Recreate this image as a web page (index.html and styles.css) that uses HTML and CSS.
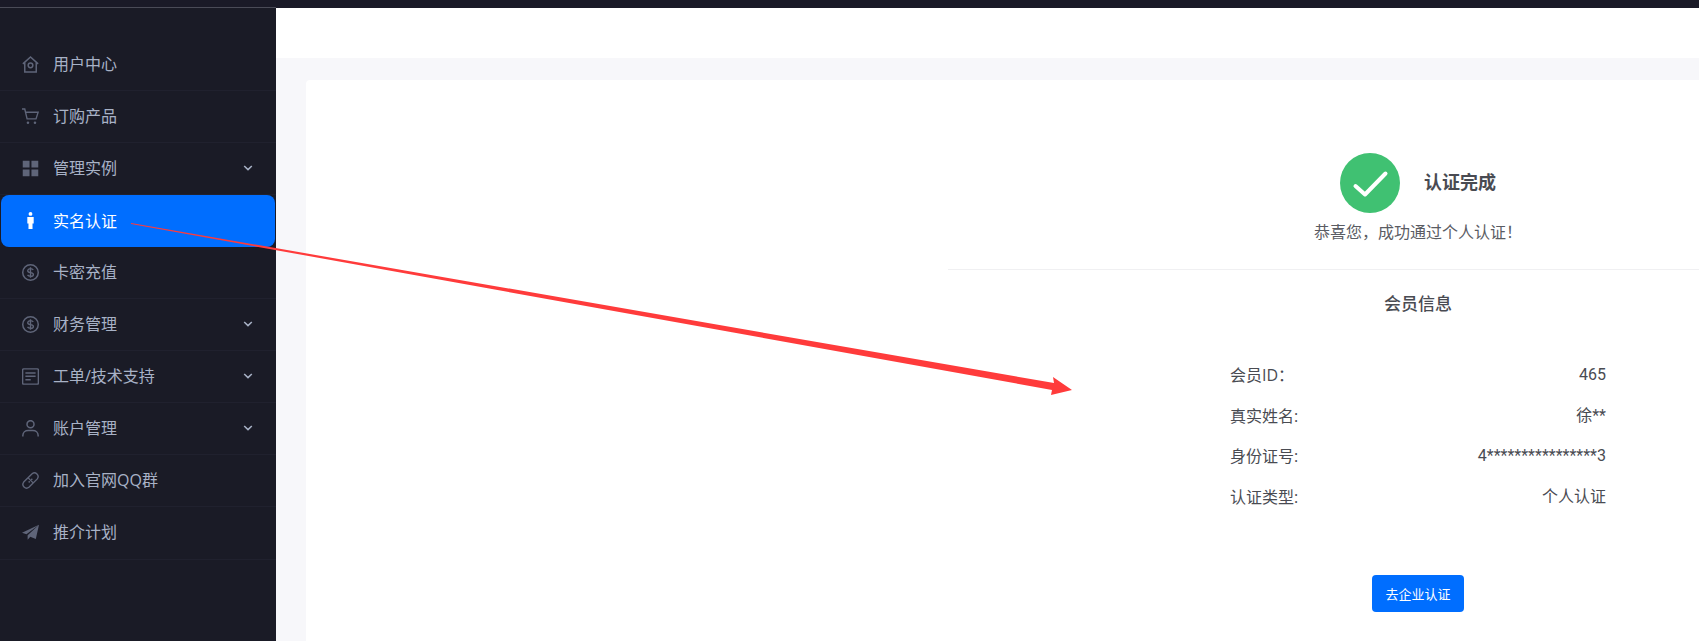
FILE: index.html
```html
<!DOCTYPE html>
<html lang="zh-CN">
<head>
  <meta charset="UTF-8">
  <meta name="viewport" content="width=device-width, initial-scale=1.0">
  <title>实名认证</title>
  <link rel="stylesheet" href="styles.css">
</head>
<body>
  <div class="topbar"></div>
  <div class="layout">
    <aside class="sidebar">
      <ul class="nav">
        <li class="nav-item">
          <svg class="nav-icon" viewBox="0 0 16 16"><path d="M.8 7.400 8 1l7.200 6.400M2.600 6v9h10.800V6" fill="none" stroke="currentColor" stroke-width="1.400"/><circle cx="8" cy="8.800" r="2.200" fill="none" stroke="currentColor" stroke-width="1.400"/></svg>
          <span>用户中心</span>
        </li>
        <li class="nav-item">
          <svg class="nav-icon" viewBox="0 0 16 16"><path d="M0 1h2.600l2.200 9.200h8.400l2-6.200H3.400" fill="none" stroke="currentColor" stroke-width="1.300"/><circle cx="5.600" cy="13.800" r="1.200" fill="currentColor"/><circle cx="12.200" cy="13.800" r="1.200" fill="currentColor"/></svg>
          <span>订购产品</span>
        </li>
        <li class="nav-item">
          <svg class="nav-icon" viewBox="0 0 16 16"><path d="M.7.700h6.400v6.400H.7zM8.900.700h6.400v6.400H8.900zM.7 8.900h6.400v6.400H.7zM8.900 8.900h6.400v6.400H8.900z" fill="currentColor"/></svg>
          <span>管理实例</span>
          <svg class="nav-arrow" viewBox="0 0 10 6"><path d="M1.200 1 5 4.600 8.800 1" fill="none" stroke="currentColor" stroke-width="1.500"/></svg>
        </li>
        <li class="nav-item active">
          <svg class="nav-icon" viewBox="0 0 16 16"><circle cx="8" cy="1.800" r="1.800" fill="currentColor"/><path d="M5 4.600h6v6.200H9.900V16H6.100v-5.200H5z" fill="currentColor"/></svg>
          <span>实名认证</span>
        </li>
        <li class="nav-item">
          <svg class="nav-icon" viewBox="0 0 16 16"><circle cx="8" cy="8" r="7.300" fill="none" stroke="currentColor" stroke-width="1.400"/><path d="M10.600 5.600C10 4.700 9 4.400 8 4.400c-1.400 0-2.600.7-2.600 1.900C5.400 9 10.700 7.200 10.700 9.800c0 1.200-1.300 1.900-2.700 1.900-1.100 0-2.200-.4-2.800-1.400M8 3v10" fill="none" stroke="currentColor" stroke-width="1.300"/></svg>
          <span>卡密充值</span>
        </li>
        <li class="nav-item">
          <svg class="nav-icon" viewBox="0 0 16 16"><circle cx="8" cy="8" r="7.300" fill="none" stroke="currentColor" stroke-width="1.400"/><path d="M10.600 5.600C10 4.700 9 4.400 8 4.400c-1.400 0-2.600.7-2.600 1.900C5.400 9 10.700 7.200 10.700 9.800c0 1.200-1.300 1.900-2.700 1.900-1.100 0-2.200-.4-2.800-1.400M8 3v10" fill="none" stroke="currentColor" stroke-width="1.300"/></svg>
          <span>财务管理</span>
          <svg class="nav-arrow" viewBox="0 0 10 6"><path d="M1.200 1 5 4.600 8.800 1" fill="none" stroke="currentColor" stroke-width="1.500"/></svg>
        </li>
        <li class="nav-item">
          <svg class="nav-icon" viewBox="0 0 16 16"><rect x=".6" y=".8" width="14.800" height="14.400" rx="1" fill="none" stroke="currentColor" stroke-width="1.300"/><path d="M3.200 4.600h9.600M3.200 7.800h9.600M3.200 11h5" fill="none" stroke="currentColor" stroke-width="1.400"/></svg>
          <span>工单/技术支持</span>
          <svg class="nav-arrow" viewBox="0 0 10 6"><path d="M1.200 1 5 4.600 8.800 1" fill="none" stroke="currentColor" stroke-width="1.500"/></svg>
        </li>
        <li class="nav-item">
          <svg class="nav-icon" viewBox="0 0 16 16"><circle cx="8" cy="3.900" r="3.300" fill="none" stroke="currentColor" stroke-width="1.400"/><path d="M.8 15.600v-1.100c0-3 2.400-4.700 5-4.700h4.400c2.600 0 5 1.700 5 4.700v1.100" fill="none" stroke="currentColor" stroke-width="1.400"/></svg>
          <span>账户管理</span>
          <svg class="nav-arrow" viewBox="0 0 10 6"><path d="M1.200 1 5 4.600 8.800 1" fill="none" stroke="currentColor" stroke-width="1.500"/></svg>
        </li>
        <li class="nav-item">
          <svg class="nav-icon" viewBox="0 0 16 16"><path d="M1.600 9.500 9.500 1.600a3.500 3.500 0 0 1 4.900 4.900l-7.900 7.900a3.500 3.500 0 0 1-4.900-4.900z" fill="none" stroke="currentColor" stroke-width="1.300"/><path d="m5.800 5.500 4.700 4.700" fill="none" stroke="currentColor" stroke-width="1.200"/><circle cx="6.800" cy="9.200" r=".8" fill="currentColor"/><circle cx="9.200" cy="6.800" r=".8" fill="currentColor"/></svg>
          <span>加入官网QQ群</span>
        </li>
        <li class="nav-item nav-last">
          <svg class="nav-icon" viewBox="0 0 16 16"><path d="M16 .6 0 8.200l4.200 1.500L16 .6zM16 .6 5.300 10.500v4.300l2.500-2.800 5.200 2z" fill="currentColor"/></svg>
          <span>推介计划</span>
        </li>
      </ul>
    </aside>
    <main class="main">
      <div class="page-head"></div>
      <div class="page-body">
        <section class="card">
          <div class="auth-top">
            <div class="auth-status">
              <svg class="auth-check" viewBox="0 0 60 60"><circle cx="30" cy="30" r="30" fill="#40c172"/><path d="M15.500 33 25 41.500 45.500 20.500" fill="none" stroke="#fff" stroke-width="4" stroke-linecap="round" stroke-linejoin="round"/></svg>
              <span class="auth-title">认证完成</span>
            </div>
            <p class="auth-desc">恭喜您，成功通过个人认证！</p>
          </div>
          <div class="auth-info">
            <h3 class="info-title">会员信息</h3>
            <dl class="info-list">
              <div class="info-row"><dt>会员ID：</dt><dd>465</dd></div>
              <div class="info-row"><dt>真实姓名:</dt><dd>徐**</dd></div>
              <div class="info-row"><dt>身份证号:</dt><dd>4****************3</dd></div>
              <div class="info-row"><dt>认证类型:</dt><dd>个人认证</dd></div>
            </dl>
            <button class="btn-primary">去企业认证</button>
          </div>
        </section>
      </div>
    </main>
  </div>
  <!-- 标注箭头 -->
  <svg class="annotation" viewBox="0 0 1699 641"><path d="M131 223 1054 383 1053 377 1072 390 1051 395 1052 390 131 224z" fill="#ff3b3b"/></svg>
</body>
</html>
```

FILE: styles.css
```css
* {
  box-sizing: border-box;
}
html, body {
  height: 100%;
}
body {
  margin: 0;
  overflow: hidden;
  display: flex;
  flex-direction: column;
  font-family: "Open Sans", "Noto Sans CJK SC", sans-serif;
  font-size: 16px;
  line-height: 24px;
  color: #494b52;
  background: #f7f7fa;
}
.topbar {
  height: 8px;
  flex-shrink: 0;
  background: #1a1a27;
}
.layout {
  flex: 1;
  display: flex;
  min-height: 0;
}
.sidebar {
  width: 276px;
  flex-shrink: 0;
  background: #1a1b26;
  box-shadow: inset 0 1px 0 #4a4b57;
  margin-top: -1px;
  padding-top: 32px;
}
.nav {
  list-style: none;
  margin: 0;
  padding: 0;
}
.nav-item {
  height: 52px;
  display: flex;
  align-items: center;
  padding: 0 23px 1px 22px;
  border-bottom: 1px solid #20212e;
  color: #a8b2c6;
}
.nav-item.active {
  margin: 0 1px;
  padding: 0 22px 1px 21px;
  border-bottom: none;
  border-radius: 8px;
  background: #006eff;
  color: #fff;
}
.nav-last {
  height: 53px;
  padding-bottom: 2px;
}
.nav-icon {
  width: 17px;
  height: 17px;
  flex-shrink: 0;
  margin-right: 14px;
  color: #5f6579;
}
.active .nav-icon {
  color: #fff;
}
.nav-arrow {
  width: 10px;
  height: 6px;
  margin-left: auto;
  color: #a8b2c6;
}
.main {
  flex: 1;
  min-width: 0;
  display: flex;
  flex-direction: column;
}
.page-head {
  height: 50px;
  flex-shrink: 0;
  background: #fff;
}
.page-body {
  flex: 1;
  padding: 22px 0 0 30px;
}
.card {
  height: 100%;
  background: #fff;
  border-radius: 4px 0 0 0;
  padding: 73px 0 0 642px;
  width: 1582px;
}
.auth-top {
  width: 940px;
  height: 117px;
  border-bottom: 1px solid #f0f0f2;
  text-align: center;
}
.auth-status {
  display: flex;
  justify-content: center;
  align-items: center;
  gap: 24px;
}
.auth-check {
  width: 60px;
  height: 60px;
}
.auth-title {
  font-size: 18px;
  font-weight: 700;
  margin-top: -2px;
}
.auth-desc {
  margin: 5px 0 0;
  line-height: 28px;
  color: #5a5c63;
}
.auth-info {
  width: 940px;
  text-align: center;
}
.info-title {
  margin: 0;
  padding-top: 21px;
  font-size: 17px;
  line-height: 26px;
  font-weight: 500;
}
.info-list {
  width: 376px;
  margin: 46px auto 0;
}
.info-row {
  display: flex;
  justify-content: space-between;
  height: 40.700px;
}
.info-row dt, .info-row dd {
  margin: 0;
}
.info-row dd {
  font-family: Roboto, "Noto Sans CJK SC", sans-serif;
}
.btn-primary {
  display: block;
  margin: 49px auto 0;
  width: 92px;
  height: 37px;
  border: none;
  border-radius: 4px;
  background: #006eff;
  color: #fff;
  font-family: inherit;
  font-size: 13px;
}
.annotation {
  position: absolute;
  left: 0;
  top: 0;
  width: 1699px;
  height: 641px;
  pointer-events: none;
}
```
